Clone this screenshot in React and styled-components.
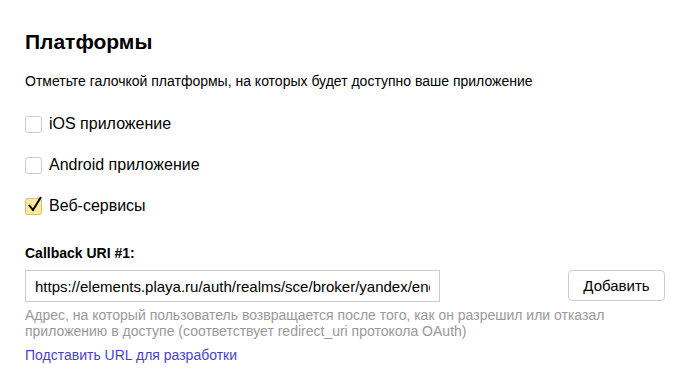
import React from 'react';
import styled, { createGlobalStyle } from 'styled-components';

const GlobalStyle = createGlobalStyle`
  body {
    margin: 0;
    background: #fff;
    font-family: Arial, "Liberation Sans", sans-serif;
    color: #000;
  }
`;

const Page = styled.div`
  padding: 30px 25px 0 25px;
  width: 693px;
  box-sizing: border-box;
`;

const Title = styled.h2`
  margin: 0;
  font-size: 21px;
  line-height: 24px;
  font-weight: bold;
`;

const Hint = styled.p`
  margin: 19px 0 0 0;
  font-size: 14px;
  line-height: 16px;
`;

const Options = styled.div`
  display: flex;
  flex-direction: column;
  gap: 21px;
  margin-top: 25px;
`;

const Option = styled.label`
  display: flex;
  align-items: center;
  gap: 7px;
  font-size: 16px;
  line-height: 20px;
  cursor: pointer;
`;

const Box = styled.span`
  position: relative;
  width: 15px;
  height: 15px;
  border: 1px solid ${p => (p.checked ? '#d9bd6a' : '#ccc')};
  background: ${p => (p.checked ? '#ffeba0' : '#fff')};
  border-radius: 3px;
  flex: none;
`;

const Tick = styled.svg`
  position: absolute;
  left: 1px;
  top: -4px;
`;

const FieldLabel = styled.div`
  margin-top: 29px;
  font-size: 14px;
  font-weight: bold;
  line-height: 16px;
`;

const Row = styled.div`
  display: flex;
  align-items: flex-start;
  justify-content: space-between;
  margin-top: 9px;
`;

const Input = styled.input`
  width: 415px;
  height: 32px;
  box-sizing: border-box;
  border: 1px solid #ccc;
  padding: 0 9px;
  font-family: Arial, "Liberation Sans", sans-serif;
  font-size: 15px;
  color: #000;
  outline: none;
`;

const Button = styled.button`
  width: 97px;
  height: 31px;
  margin-right: 3px;
  background: #fff;
  border: 1px solid #ccc;
  border-radius: 4px;
  font-family: Arial, "Liberation Sans", sans-serif;
  font-size: 15px;
  color: #000;
`;

const Help = styled.p`
  margin: 5px 0 0 0;
  width: 600px;
  font-size: 14px;
  line-height: 16px;
  color: #999;
`;

const Link = styled.a`
  display: inline-block;
  margin-top: 8px;
  font-size: 14px;
  line-height: 16px;
  color: #4a3fcb;
  text-decoration: none;
`;

const platforms = [
  { name: 'iOS приложение', checked: false },
  { name: 'Android приложение', checked: false },
  { name: 'Веб-сервисы', checked: true },
];

export default function App() {
  return (
    <Page>
      <GlobalStyle />
      <Title>Платформы</Title>
      <Hint>Отметьте галочкой платформы, на которых будет доступно ваше приложение</Hint>
      <Options>
        {platforms.map(p => (
          <Option key={p.name}>
            <Box checked={p.checked}>
              {p.checked && (
                <Tick width="16" height="18" viewBox="0 0 16 18">
                  <path d="M2 10 L6 15 L14 2" fill="none" stroke="#000" strokeWidth="2" />
                </Tick>
              )}
            </Box>
            {p.name}
          </Option>
        ))}
      </Options>
      <FieldLabel>Callback URI #1:</FieldLabel>
      <Row>
        <Input readOnly value="https://elements.playa.ru/auth/realms/sce/broker/yandex/endpoint" />
        <Button>Добавить</Button>
      </Row>
      <Help>
        Адрес, на который пользователь возвращается после того, как он разрешил или отказал приложению в доступе (соответствует redirect_uri протокола OAuth)
      </Help>
      <Link href="#">Подставить URL для разработки</Link>
    </Page>
  );
}
